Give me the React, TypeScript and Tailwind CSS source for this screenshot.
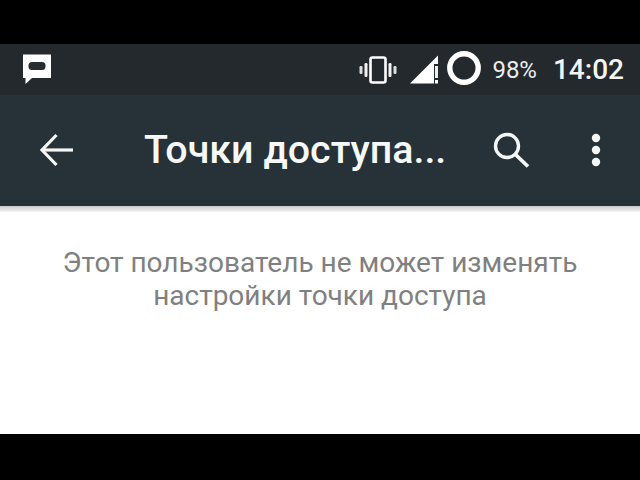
const FONT = "font-['Roboto','Liberation_Sans',sans-serif]";

function MessageIcon() {
  return (
    <svg width="30" height="30" viewBox="0 0 30 30" className="mt-[-2px]">
      <path d="M1 1H29V24.5H10L3.5 30.5V24.5H1Z" transform="translate(0 -0.5)" fill="#fff" />
      <rect x="6.5" y="8" width="17" height="8" rx="3.5" fill="#262d31" />
    </svg>
  );
}

function VibrateIcon() {
  return (
    <svg width="38" height="30" viewBox="0 0 38 30" fill="none">
      <rect x="11.5" y="2.5" width="15" height="25" rx="2" stroke="#fff" strokeWidth="2.6" />
      <rect x="5.5" y="8" width="3" height="14" rx="1.2" fill="#f2f2f2" />
      <rect x="29.5" y="8" width="3" height="14" rx="1.2" fill="#f2f2f2" />
      <rect x="0.5" y="11" width="3" height="8" rx="1.2" fill="#ddd" />
      <rect x="34.5" y="11" width="3" height="8" rx="1.2" fill="#ddd" />
    </svg>
  );
}

function SignalIcon() {
  return (
    <svg width="30" height="30" viewBox="0 0 30 30" fill="#fff">
      <path d="M1 28.5L29 0.5V9H25V28.5Z" />
      <rect x="26" y="11" width="3" height="12" fill="#eee" />
      <rect x="26" y="25" width="3" height="3.5" />
    </svg>
  );
}

function BatteryRing() {
  return (
    <svg width="34" height="34" viewBox="0 0 34 34" fill="none">
      <circle cx="17" cy="17" r="14.2" stroke="#fff" strokeWidth="5.4" />
    </svg>
  );
}

function BackIcon() {
  return (
    <svg width="36" height="34" viewBox="0 0 36 34" fill="none" stroke="#f4f6f6" strokeWidth="3.2">
      <path d="M34 17H3" />
      <path d="M17.5 2L3 17L17.5 32" />
    </svg>
  );
}

function SearchIcon() {
  return (
    <svg width="38" height="36" viewBox="0 0 38 36" fill="none" stroke="#f4f6f6" strokeWidth="3.4">
      <circle cx="14" cy="14" r="11.5" />
      <path d="M22.5 22.5L35 34.5" strokeWidth="3.8" />
    </svg>
  );
}

function MoreIcon() {
  return (
    <svg width="10" height="34" viewBox="0 0 10 34" fill="#f4f6f6">
      <circle cx="5" cy="5" r="4.2" />
      <circle cx="5" cy="17" r="4.2" />
      <circle cx="5" cy="29" r="4.2" />
    </svg>
  );
}

export default function App() {
  return (
    <div className={`flex h-[480px] w-[640px] flex-col overflow-hidden bg-black ${FONT}`}>
      <div className="h-[44px] shrink-0 bg-black" />

      <div className="flex h-[51px] shrink-0 items-center bg-[#23292d] pl-[22px] pr-[16px] text-white">
        <MessageIcon />
        <div className="ml-auto flex items-center">
          <VibrateIcon />
          <div className="ml-[12px]">
            <SignalIcon />
          </div>
          <div className="mb-[3px] ml-[8px]">
            <BatteryRing />
          </div>
          <span className="ml-[11px] text-[24px] font-normal leading-none text-[#eceeee]">98%</span>
          <span className="ml-[16px] mt-[1px] text-[28px] font-medium leading-none text-[#f4f5f5]">14:02</span>
        </div>
      </div>

      <div className="flex h-[111px] shrink-0 items-center bg-[#263238] pl-[39px] pr-[39px] pb-[1px]">
        <BackIcon />
        <h1 className="ml-[69px] text-[39.4px] font-medium leading-none text-[#f7f8f8]">Точки доступа...</h1>
        <div className="ml-auto flex items-center gap-[60px]">
          <SearchIcon />
          <MoreIcon />
        </div>
      </div>

      <div className="h-[6px] shrink-0 bg-gradient-to-b from-[#c8cacb] to-[#f4f4f4]" />

      <div className="flex h-[222px] shrink-0 flex-col items-center bg-white pt-[34px] text-center text-[28px] leading-[33px] text-[#808080]">
        <p>Этот пользователь не может изменять</p>
        <p>настройки точки доступа</p>
      </div>

      <div className="flex-1 bg-black" />
    </div>
  );
}
